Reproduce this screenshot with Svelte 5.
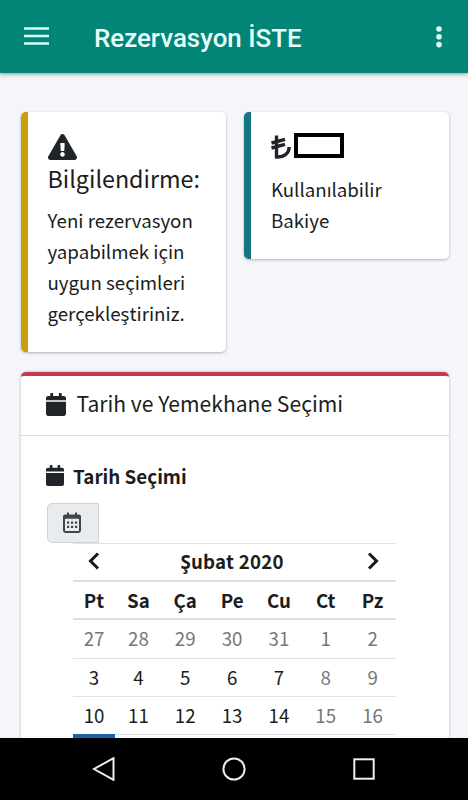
<script>
    const days = ["Pt", "Sa", "Ça", "Pe", "Cu", "Ct", "Pz"];

    const weeks = [
        [27, 28, 29, 30, 31, 1, 2],
        [3, 4, 5, 6, 7, 8, 9],
        [10, 11, 12, 13, 14, 15, 16]
    ];

    // weekends and days of the previous month can't be picked
    function isDisabled(week, col){
        return week === 0 || col > 4;
    }
</script>

{#snippet calendarIcon()}
    <svg class="calendar-icon" viewBox="0 0 448 512" preserveAspectRatio="none">
        <path d="M0 464c0 26.500 21.500 48 48 48h352c26.500 0 48-21.500 48-48V192H0v272zm448-352v48H0v-48c0-26.500 21.500-48 48-48h48V12c0-6.600 5.400-12 12-12h40c6.600 0 12 5.400 12 12v52h128V12c0-6.600 5.400-12 12-12h40c6.600 0 12 5.400 12 12v52h48c26.500 0 48 21.500 48 48z"/>
    </svg>
{/snippet}

<div class="screen">
    <header class="topbar">
        <svg class="menu-icon" viewBox="0 0 25 18">
            <path d="M0 1.500h25M0 9h25M0 16.500h25"/>
        </svg>
        <h1>Rezervasyon İSTE</h1>
        <svg class="more-icon" viewBox="0 0 6 22">
            <circle cx="3" cy="3" r="2.800"/>
            <circle cx="3" cy="10.800" r="2.800"/>
            <circle cx="3" cy="18.600" r="2.800"/>
        </svg>
    </header>

    <main class="content">
        <div class="infos">
            <section class="callout warning">
                <svg class="warning-icon" viewBox="0 0 576 512" preserveAspectRatio="none">
                    <path d="M569.500 440C588 472 564.800 512 527.900 512H48.100c-36.900 0-60-40.100-41.600-72L246.400 24c18.500-32 64.700-32 83.200 0l239.900 416zM288 354c-25.400 0-46 20.600-46 46s20.600 46 46 46 46-20.600 46-46-20.600-46-46-46zm-43.700-165.300l7.400 136c.3 6.400 5.600 11.300 12 11.300h48.600c6.400 0 11.700-5 12-11.300l7.400-136c.4-6.900-5.100-12.700-12-12.700h-63.400c-6.900 0-12.400 5.800-12 12.700z"/>
                </svg>
                <h2>Bilgilendirme:</h2>
                <p>Yeni rezervasyon<br>yapabilmek için<br>uygun seçimleri<br>gerçekleştiriniz.</p>
            </section>

            <section class="callout balance">
                <div class="amount">
                    <svg class="lira-icon" viewBox="0 0 20 24">
                        <path d="M5.500 .5v21.500c7.500 .5 12.500-3.500 12.700-10M.5 8L14 4.300M.5 13L14 9.300"/>
                    </svg>
                    <span class="amount-box"></span>
                </div>
                <p>Kullanılabilir<br>Bakiye</p>
            </section>
        </div>

        <section class="card">
            <div class="card-header">
                {@render calendarIcon()}
                <h3>Tarih ve Yemekhane Seçimi</h3>
            </div>
            <div class="card-body">
                <div class="field-label">
                    {@render calendarIcon()}
                    <span>Tarih Seçimi</span>
                </div>
                <button class="date-btn" aria-label="Tarih">
                    <svg viewBox="0 0 18 21">
                        <path class="frame" d="M1 5.500h16v12.800a1.700 1.700 0 0 1-1.700 1.700H2.700A1.700 1.700 0 0 1 1 18.300z"/>
                        <path class="solid" d="M0 6.500V4.500Q0 2.500 2 2.500h2V.5h2v2h6V.5h2v2h2q2 0 2 2v2z"/>
                        <path class="dots" d="M4 10.700h10.200M4 14.900h10.200"/>
                    </svg>
                </button>
                <table>
                    <colgroup>
                        <col class="first">
                        <col span="6">
                    </colgroup>
                    <thead>
                        <tr>
                            <th><svg class="chevron" viewBox="0 0 12 18"><path d="M10 1.500L2.500 9l7.500 7.500"/></svg></th>
                            <th class="month" colspan="5">Şubat 2020</th>
                            <th><svg class="chevron" viewBox="0 0 12 18"><path d="M2 1.500L9.500 9 2 16.500"/></svg></th>
                        </tr>
                        <tr>
                            {#each days as day}
                                <th>{day}</th>
                            {/each}
                        </tr>
                    </thead>
                    <tbody>
                        {#each weeks as week, i}
                            <tr>
                                {#each week as day, col}
                                    <td class:disabled={isDisabled(i, col)}>{day}</td>
                                {/each}
                            </tr>
                        {/each}
                        <tr>
                            <td class="selected"></td>
                            <td colspan="6"></td>
                        </tr>
                    </tbody>
                </table>
            </div>
        </section>
    </main>

    <nav class="navbar">
        <svg viewBox="0 0 24 24"><path d="M21.500 1.200v21.600L2 12z"/></svg>
        <svg viewBox="0 0 24 24"><circle cx="12" cy="12" r="10.600"/></svg>
        <svg viewBox="0 0 24 24"><rect x="2.300" y="2.300" width="19.400" height="19.400"/></svg>
    </nav>
</div>

<style>
    :global(body){
        margin: 0;
        overflow: hidden;
    }

    .screen{
        display: flex;
        flex-direction: column;
        width: 468px;
        height: 800px;
        overflow: hidden;
        background: #f4f6fa;
        color: #1b1d20;
        font-family: "Noto Sans CJK JP", "Noto Sans", sans-serif;
    }

    h1, h2, h3, p{
        margin: 0;
        font-weight: 400;
        white-space: nowrap;
    }

    .topbar{
        display: flex;
        align-items: center;
        flex: none;
        box-sizing: border-box;
        height: 73px;
        padding: 0 26px 0 24px;
        background: #028576;
        box-shadow: 0 1px 4px rgba(0, 60, 50, 0.5);
    }

    .topbar h1{
        flex: 1;
        margin: 3px 0 0 45px;
        color: #e6fffb;
        font-family: Roboto, sans-serif;
        font-size: 25.900px;
        font-weight: 500;
        line-height: 32px;
    }

    .menu-icon{
        width: 25px;
        height: 18px;
        margin-top: -1px;
        stroke: #d8fff8;
        stroke-width: 2.600;
    }

    .more-icon{
        width: 6px;
        height: 22px;
        fill: #e0fff9;
    }

    .content{
        flex: 1;
        min-height: 0;
        overflow: hidden;
        padding: 38.500px 19px 0 20.500px;
    }

    .infos{
        display: grid;
        grid-template-columns: 205px 205px;
        justify-content: space-between;
        align-items: start;
        margin-bottom: 20.500px;
    }

    .callout{
        box-sizing: border-box;
        border-left: 7px solid;
        border-radius: 5px;
        background: #fff;
        box-shadow: 0 1px 3px rgba(0, 0, 0, 0.28);
    }

    .warning{
        height: 240px;
        padding: 22px 0 0 20px;
        border-color: #cb9f09;
    }

    .balance{
        height: 147px;
        padding: 21px 0 0 20px;
        border-color: #157581;
    }

    .callout svg{
        display: block;
    }

    .warning-icon{
        width: 29px;
        height: 26px;
        fill: #212529;
    }

    .callout h2{
        margin: 2px 0 10px;
        font-size: 23.300px;
        line-height: 32px;
    }

    .callout p{
        font-size: 18.700px;
        line-height: 31.300px;
    }

    .amount{
        display: flex;
        gap: 3px;
        height: 26px;
        margin-bottom: 14px;
    }

    .lira-icon{
        width: 20px;
        height: 24px;
        margin-top: 2px;
        fill: none;
        stroke: #212529;
        stroke-width: 3.400;
    }

    .amount-box{
        box-sizing: border-box;
        width: 50px;
        height: 25px;
        border: 4px solid #000;
    }

    .card{
        height: 500px;
        border-top: 4px solid #c43a4c;
        border-radius: 5px;
        background: #fff;
        box-shadow: 0 0 3px rgba(0, 0, 0, 0.28);
    }

    .card-header{
        display: flex;
        align-items: center;
        box-sizing: border-box;
        height: 60px;
        padding-left: 25.500px;
        border-bottom: 1px solid #dedfe0;
    }

    .calendar-icon{
        flex: none;
        fill: #212529;
    }

    .card-header .calendar-icon{
        width: 20px;
        height: 23px;
        margin-top: -3px;
    }

    .card-header h3{
        margin: -5px 0 0 10.500px;
        font-size: 21.100px;
        line-height: 30px;
    }

    .card-body{
        padding: 24px 26px 0 26.500px;
    }

    .field-label{
        display: flex;
        align-items: center;
        height: 32px;
        margin-bottom: 11px;
        font-size: 18.800px;
        font-weight: 700;
        line-height: 32px;
    }

    .field-label .calendar-icon{
        width: 18px;
        height: 21px;
        margin: -1px 9px 0 -1px;
    }

    .date-btn{
        display: flex;
        align-items: center;
        justify-content: center;
        box-sizing: border-box;
        width: 52px;
        height: 40px;
        padding: 0 2px 2px 0;
        border: 1px solid #ced4da;
        border-radius: 5px 0 0 5px;
        background: #e9ecef;
    }

    .date-btn svg{
        width: 18px;
        height: 21px;
    }

    .frame{
        fill: none;
        stroke: #40464c;
        stroke-width: 2;
    }

    .solid{
        fill: #40464c;
    }

    .dots{
        fill: none;
        stroke: #40464c;
        stroke-width: 2.200;
        stroke-dasharray: 2.200 1.800;
    }

    table{
        width: 323px;
        margin-left: 26px;
        border-collapse: separate;
        border-spacing: 0;
        table-layout: fixed;
    }

    .first{
        width: 42px;
    }

    th, td{
        box-sizing: border-box;
        height: 38px;
        padding: 0 0 2px;
        border-top: 1px solid #dee2e6;
        font-size: 18.700px;
        line-height: 30px;
        text-align: center;
        vertical-align: middle;
    }

    th{
        height: 38.500px;
        padding: 0;
        border-top: 0;
        border-bottom: 2px solid #dcdfe2;
        font-weight: 700;
    }

    thead tr:first-child th{
        padding-bottom: 2px;
        border-top: 1px solid #dee2e6;
    }

    tbody tr:first-child td{
        border-top: 0;
    }

    .month{
        letter-spacing: 0.250px;
    }

    .chevron{
        display: block;
        width: 12px;
        height: 18px;
        margin: 0 auto;
        fill: none;
        stroke: #16181b;
        stroke-width: 3;
    }

    .disabled{
        color: #75787b;
    }

    .selected{
        border-color: #1b61ad;
        background: #1b61ad;
    }

    .navbar{
        display: flex;
        align-items: center;
        flex: none;
        box-sizing: border-box;
        height: 62px;
        padding-left: 92px;
        gap: 106px;
        background: #000;
        z-index: 1;
    }

    .navbar svg{
        width: 24px;
        height: 24px;
        fill: none;
        stroke: #eee;
        stroke-width: 2;
    }
</style>
